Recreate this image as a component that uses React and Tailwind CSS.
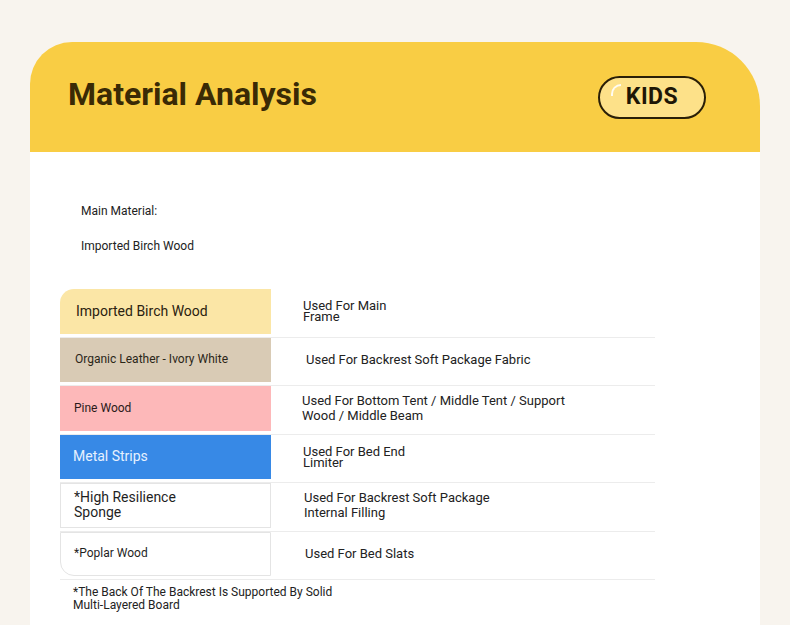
const rows = [
  { name: 'Imported Birch Wood', use: ['Used For Main', 'Frame'], cell: 'bg-[#fbe6a6] rounded-tl-[14px] text-[14px] text-[#2b2210]', tight: true, pl: 'pl-4', upl: 'pl-8' },
  { name: 'Organic Leather - Ivory White', use: ['Used For Backrest Soft Package Fabric'], cell: 'bg-[#d9cbb5] text-[12px] text-[#2b2618]', pl: 'pl-[15px]', upl: 'pl-[35px]' },
  { name: 'Pine Wood', use: ['Used For Bottom Tent / Middle Tent / Support', 'Wood / Middle Beam'], cell: 'bg-[#fdb8b9] text-[12px] text-[#2b1a1a]', pl: 'pl-[14px]', upl: 'pl-[31px]' },
  { name: 'Metal Strips', use: ['Used For Bed End', 'Limiter'], cell: 'bg-[#3789e6] text-[14px] text-[#e6f1ff]', tight: true, pl: 'pl-[13px]', upl: 'pl-8' },
  { name: ['*High Resilience', 'Sponge'], use: ['Used For Backrest Soft Package', 'Internal Filling'], cell: 'bg-white border border-[#e4e4e4] text-[14px] text-[#1f1f1f]', pl: 'pl-[13px]', upl: 'pl-[33px]' },
  { name: '*Poplar Wood', use: ['Used For Bed Slats'], cell: 'bg-white border border-[#e4e4e4] rounded-bl-[14px] text-[12px] text-[#1f1f1f]', pl: 'pl-[13px]', upl: 'pl-[34px]' },
]

const Kids = () => (
  <div className="relative flex h-[43px] w-[108px] items-center justify-center rounded-full border-[2.5px] border-[#2a1f07] bg-[#fde189]">
    <span className="absolute left-[11px] top-[6px] h-[12px] w-[10px] rounded-tl-full border-l-[2.5px] border-t-[2.5px] border-white/90" />
    <span className="text-[23px] font-bold tracking-[0.5px] text-[#1e1606]">KIDS</span>
  </div>
)

export default function App() {
  return (
    <div className="min-h-[625px] w-[790px] overflow-hidden bg-[#f8f4ee] pt-[42px]" style={{ fontFamily: 'Roboto, "Liberation Sans", sans-serif' }}>
      <div className="ml-[30px] w-[730px]">
        <div className="flex h-[110px] items-center justify-between rounded-tl-[42px] rounded-tr-[64px] bg-[#f9cd44] pl-[38px] pr-[54px]">
          <h1 className="-mt-[6px] text-[32px] font-bold text-[#3a2a05]">Material Analysis</h1>
          <Kids />
        </div>
        <div className="bg-white pb-[30px] pt-[51px]">
          <div className="pl-[51px] text-[12px] text-[#222]">
            <p className="leading-[16px]">Main Material:</p>
            <p className="mt-[19px] leading-[16px]">Imported Birch Wood</p>
          </div>
          <div className="ml-[30px] mt-[35px] w-[595px]">
            {rows.map((r, i) => (
              <div key={i} className="flex h-[48.5px] border-b border-[#ececec]">
                <div className={`mb-[3px] flex w-[211px] flex-col justify-center ${r.pl} ${r.cell} leading-[15px]`}>
                  {Array.isArray(r.name) ? r.name.map((t) => <span key={t}>{t}</span>) : <span>{r.name}</span>}
                </div>
                <div className={`flex flex-1 flex-col justify-center pb-[3px] ${r.upl} text-[13px] text-[#222] ${r.tight ? 'leading-[11px]' : 'leading-[15px]'}`}>
                  {r.use.map((t) => <span key={t}>{t}</span>)}
                </div>
              </div>
            ))}
          </div>
          <div className="ml-[43px] mt-[6px] text-[12px] leading-[13px] text-[#222]">
            <p>*The Back Of The Backrest Is Supported By Solid</p>
            <p>Multi-Layered Board</p>
          </div>
        </div>
      </div>
    </div>
  )
}
